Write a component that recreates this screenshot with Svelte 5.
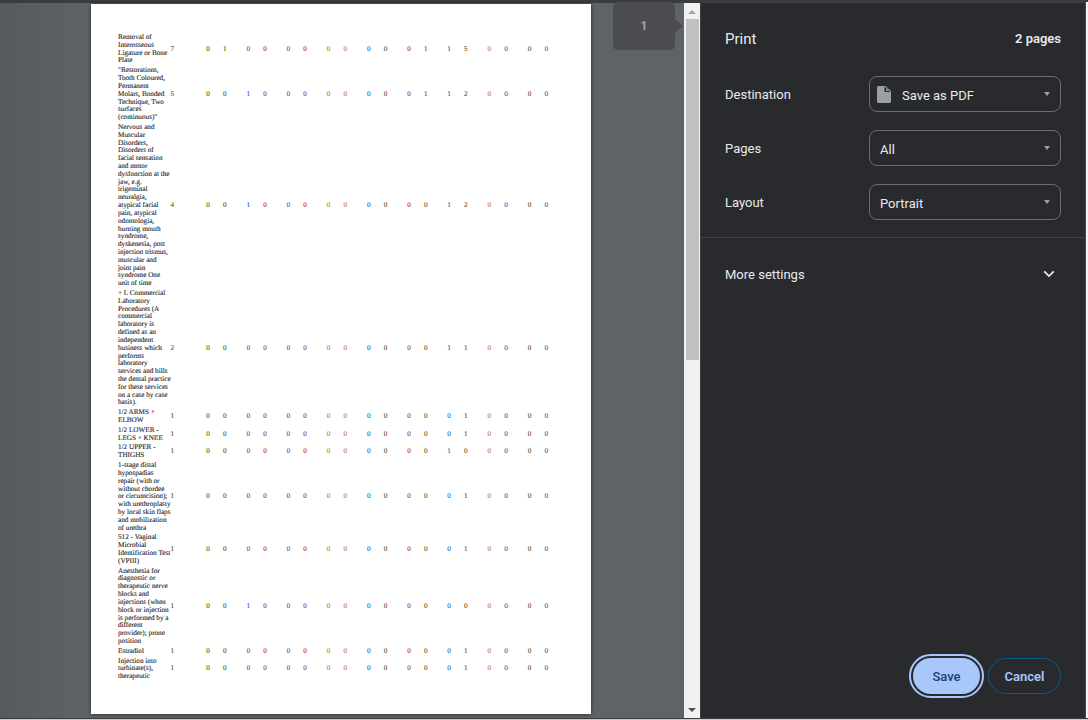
<script>
  const rows = [
    { label: ['Removal of', 'Interosseous', 'Ligature or Bone', 'Plate'], count: 7, vals: [0,1,0,0,0,0,0,0,0,0,0,1,1,5,0,0,0,0] },
    { label: ['"Restorations,', 'Tooth Coloured,', 'Permanent', 'Molars, Bonded', 'Technique, Two', 'surfaces', '(continuous)"'], count: 5, vals: [0,0,1,0,0,0,0,0,0,0,0,1,1,2,0,0,0,0] },
    { label: ['Nervous and', 'Muscular', 'Disorders,', 'Disorders of', 'facial sensation', 'and motor', 'dysfonction at the', 'jaw, e.g.', 'trigeminal', 'neuralgia,', 'atypical facial', 'pain, atypical', 'odontologia,', 'burning mouth', 'syndrome,', 'dyskenesia, post', 'injection trismus,', 'muscular and', 'joint pain', 'syndrome One', 'unit of time'], count: 4, vals: [0,0,1,0,0,0,0,0,0,0,0,0,1,2,0,0,0,0] },
    { label: ['+ L Commercial', 'Laboratory', 'Procedures (A', 'commercial', 'laboratory is', 'defined as an', 'independent', 'business which', 'performs', 'laboratory', 'services and bills', 'the dental practice', 'for these services', 'on a case by case', 'basis).'], count: 2, vals: [0,0,0,0,0,0,0,0,0,0,0,0,1,1,0,0,0,0] },
    { label: ['1/2 ARMS +', 'ELBOW'], count: 1, vals: [0,0,0,0,0,0,0,0,0,0,0,0,0,1,0,0,0,0] },
    { label: ['1/2 LOWER -', 'LEGS + KNEE'], count: 1, vals: [0,0,0,0,0,0,0,0,0,0,0,0,0,1,0,0,0,0] },
    { label: ['1/2 UPPER -', 'THIGHS'], count: 1, vals: [0,0,0,0,0,0,0,0,0,0,0,0,1,0,0,0,0,0] },
    { label: ['1-stage distal', 'hypospadias', 'repair (with or', 'without chordee', 'or circumcision);', 'with urethroplasty', 'by local skin flaps', 'and mobilization', 'of urethra'], count: 1, vals: [0,0,0,0,0,0,0,0,0,0,0,0,0,1,0,0,0,0] },
    { label: ['512 - Vaginal', 'Microbial', 'Identification Test', '(VPIII)'], count: 1, vals: [0,0,0,0,0,0,0,0,0,0,0,0,0,1,0,0,0,0] },
    { label: ['Anesthesia for', 'diagnostic or', 'therapeutic nerve', 'blocks and', 'injections (when', 'block or injection', 'is performed by a', 'different', 'provider); prone', 'position'], count: 1, vals: [0,0,1,0,0,0,0,0,0,0,0,0,0,0,0,0,0,0] },
    { label: ['Estradiol'], count: 1, vals: [0,0,0,0,0,0,0,0,0,0,0,0,0,1,0,0,0,0] },
    { label: ['Injection into', 'turbinate(s),', 'therapeutic'], count: 1, vals: [0,0,0,0,0,0,0,0,0,0,0,0,0,1,0,0,0,0] }
  ];
  const tones = ['ol','ol','bl','rd','bl','rd','or','or','bl','ol','rd','ol','bl','ol','or','bl','ol','bl'];
  const settings = [
    { name: 'Destination', value: 'Save as PDF', icon: true },
    { name: 'Pages', value: 'All', icon: false },
    { name: 'Layout', value: 'Portrait', icon: false }
  ];
</script>

<div class="window">
  <main class="preview">
    <div class="viewer">
      <article class="sheet">
        <table>
          <colgroup>
            <col class="c-label" /><col class="c-count" />
            {#each tones as _, i}<col class={i % 2 ? 'c-b' : 'c-a'} />{/each}
          </colgroup>
          <tbody>
            {#each rows as row}
              <tr>
                <td class="label">{#each row.label as line}<span>{line}</span>{/each}</td>
                <td class="num ol">{row.count}</td>
                {#each row.vals as v, i}<td class="num {tones[i]}">{v}</td>{/each}
              </tr>
            {/each}
          </tbody>
        </table>
      </article>
      <div class="thumb">1</div>
    </div>
    <div class="scrollbar">
      <div class="arrow up"></div>
      <div class="bar"></div>
      <div class="arrow down"></div>
    </div>
  </main>
  <aside class="panel">
    <header class="head"><h1>Print</h1><span class="count">2 pages</span></header>
    <section class="settings">
      {#each settings as s}
        <div class="row">
          <span class="name">{s.name}</span>
          <div class="select">
            {#if s.icon}
              <svg class="doc" width="14" height="17" viewBox="0 0 14 17"><path d="M1.500 0H8.500L14 5v10.500a1.500 1.500 0 0 1-1.500 1.500h-11A1.500 1.500 0 0 1 0 15.500V1.500A1.500 1.500 0 0 1 1.500 0z" fill="#9aa0a6"/><path d="M7.500 0.500V6h6z" fill="#292a2d"/><path d="M9 2.500V5h3z" fill="#9aa0a6"/></svg>
            {/if}
            <span>{s.value}</span>
            <i class="caret"></i>
          </div>
        </div>
      {/each}
    </section>
    <div class="more">
      <span>More settings</span>
      <svg width="12" height="8" viewBox="0 0 12 8"><path d="M1.200 1.300 6 6l4.800-4.700" fill="none" stroke="#e8eaed" stroke-width="1.700"/></svg>
    </div>
    <footer class="actions">
      <button class="save">Save</button>
      <button class="cancel">Cancel</button>
    </footer>
  </aside>
  <div class="edge"></div>
</div>

<style>
  :global(body) { margin: 0; background: #3a3b3d; }
  .window { width: 1088px; height: 720px; box-sizing: border-box; display: flex; padding-top: 3px; padding-bottom: 2px; background: #3b3c3e; position: relative; overflow: hidden; font-family: Roboto, "Noto Sans", sans-serif; }
  .window::after { content: ""; position: absolute; left: 0; right: 0; bottom: 0; height: 1px; background: #c9cacb; }
  .preview { width: 700px; flex: none; display: flex; background: linear-gradient(90deg, #56595e, #5f6368 90px); }
  .viewer { width: 684px; flex: none; position: relative; padding: 1px 0 0 91px; box-sizing: border-box; }
  .sheet { width: 500px; height: 710px; background: #fff; padding-top: 29px; box-sizing: border-box; box-shadow: 0 0 4px rgba(0,0,0,.6); }
  table { border-collapse: collapse; table-layout: fixed; width: 449px; margin-left: 27px; font: 7.2px/7.82px "Liberation Serif", serif; color: #18202c; -webkit-text-stroke: .1px currentColor; text-rendering: geometricPrecision; }
  .c-label { width: 51.500px; }
  .c-count { width: 35.700px; }
  .c-a { width: 16.800px; }
  .c-b { width: 23.400px; }
  td { padding: 1px 0; vertical-align: middle; }
  .label span { display: block; white-space: nowrap; }
  .num { padding-left: 1px; }
  .ol { color: #5c4f10; }
  .bl { color: #0f62c8; }
  .rd { color: #b02818; }
  .or { color: #c87a10; }
  .thumb { position: absolute; left: 613px; top: -1px; width: 62px; height: 48px; background: #4a4c50; border-radius: 5px; color: #a3a5a8; font-size: 12px; font-weight: 700; display: flex; align-items: center; justify-content: center; }
  .thumb::after { content: ""; position: absolute; left: 62px; top: 17px; border-left: 8px solid #4a4c50; border-top: 7px solid transparent; border-bottom: 7px solid transparent; }
  .scrollbar { width: 16px; background: #f1f1f1; display: flex; flex-direction: column; align-items: center; }
  .bar { width: 13px; height: 341px; background: #c1c1c1; }
  .arrow { width: 0; height: 0; border-left: 4px solid transparent; border-right: 4px solid transparent; }
  .up { border-bottom: 4px solid #a3a3a3; margin: 7px 0 5px; }
  .down { border-top: 4px solid #505050; margin-top: auto; margin-bottom: 6px; }
  .panel { width: 384px; flex: none; margin-left: 1px; background: #292a2d; color: #e8eaed; display: flex; flex-direction: column; font-size: 13px; }
  .edge { flex: 1; border-left: 1px solid #46474a; background: #f4f4f4; margin-top: -1px; }
  .head { display: flex; justify-content: space-between; align-items: center; padding: 26px 24px 0; height: 19px; }
  h1 { margin: 0; font-size: 15px; font-weight: 400; }
  .count { font-weight: 600; font-size: 13px; }
  .settings { display: flex; flex-direction: column; gap: 18px; margin-top: 28px; padding: 0 24px 17px; border-bottom: 1px solid #3f4043; }
  .row { display: flex; align-items: center; justify-content: space-between; }
  .select { width: 192px; height: 36px; box-sizing: border-box; border: 1px solid #6c6e72; border-radius: 8px; display: flex; align-items: center; padding: 2px 10px 0; position: relative; }
  .doc { margin: 0 11px 0 -3px; position: relative; top: -1px; }
  .caret { position: absolute; right: 10px; top: 15px; border-top: 4px solid #9aa0a6; border-left: 3.500px solid transparent; border-right: 3.500px solid transparent; }
  .more { display: flex; justify-content: space-between; align-items: center; padding: 0 30px 0 24px; height: 72px; }
  .actions { margin-top: auto; display: flex; justify-content: flex-end; align-items: center; gap: 8px; padding: 0 24px 24px 0; }
  button { font: inherit; font-weight: 600; border-radius: 18px; height: 36px; }
  .save { width: 67px; background: #a8c7fa; color: #1b3f7c; border: 0; outline: 2px solid #a8c7fa; outline-offset: 2px; box-shadow: 0 0 0 2px #292a2d; font-weight: 500; }
  .cancel { width: 73px; background: transparent; color: #a8c7fa; border: 1px solid #0a5a8a; }
</style>
